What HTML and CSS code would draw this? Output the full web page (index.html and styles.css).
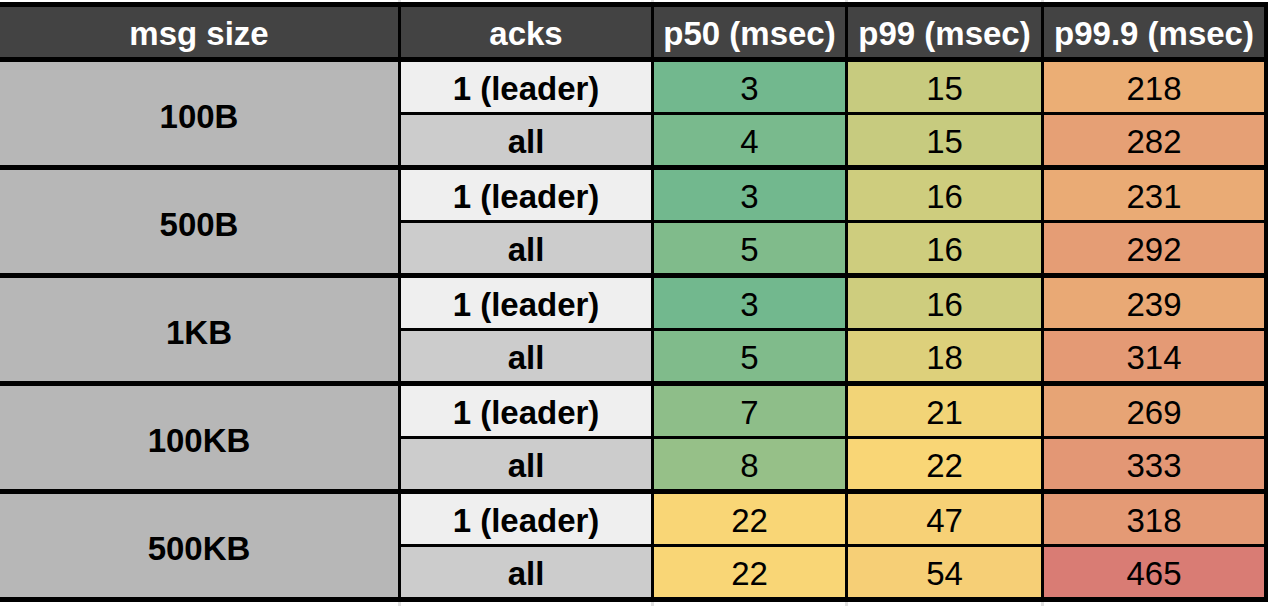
FILE: index.html
```html
<!DOCTYPE html>
<html lang="en">
<head>
<meta charset="utf-8">
<title>Kafka latency</title>
<link rel="stylesheet" href="styles.css">
</head>
<body>
<div class="page">
  <div class="sheet">
    <div class="cell head first">msg size</div>
    <div class="cell head">acks</div>
    <div class="cell head">p50 (msec)</div>
    <div class="cell head">p99 (msec)</div>
    <div class="cell head last">p99.9 (msec)</div>

    <div class="cell size">100B</div>
    <div class="cell ack leader">1 (leader)</div>
    <div class="cell num top" style="background:#72b88e">3</div>
    <div class="cell num top" style="background:#c7cb7f">15</div>
    <div class="cell num top last" style="background:#ebae75">218</div>
    <div class="cell ack all">all</div>
    <div class="cell num bot" style="background:#79ba8d">4</div>
    <div class="cell num bot" style="background:#c7cb7f">15</div>
    <div class="cell num bot last" style="background:#e6a075">282</div>

    <div class="cell size">500B</div>
    <div class="cell ack leader">1 (leader)</div>
    <div class="cell num top" style="background:#72b88e">3</div>
    <div class="cell num top" style="background:#cecd7e">16</div>
    <div class="cell num top last" style="background:#eaab75">231</div>
    <div class="cell ack all">all</div>
    <div class="cell num bot" style="background:#80bb8b">5</div>
    <div class="cell num bot" style="background:#cecd7e">16</div>
    <div class="cell num bot last" style="background:#e59d75">292</div>

    <div class="cell size">1KB</div>
    <div class="cell ack leader">1 (leader)</div>
    <div class="cell num top" style="background:#72b88e">3</div>
    <div class="cell num top" style="background:#cecd7e">16</div>
    <div class="cell num top last" style="background:#e9a975">239</div>
    <div class="cell ack all">all</div>
    <div class="cell num bot" style="background:#80bb8b">5</div>
    <div class="cell num bot" style="background:#ddd07b">18</div>
    <div class="cell num bot last" style="background:#e49a75">314</div>

    <div class="cell size">100KB</div>
    <div class="cell ack leader">1 (leader)</div>
    <div class="cell num top" style="background:#8ebe89">7</div>
    <div class="cell num top" style="background:#f2d477">21</div>
    <div class="cell num top last" style="background:#e7a475">269</div>
    <div class="cell ack all">all</div>
    <div class="cell num bot" style="background:#96c088">8</div>
    <div class="cell num bot" style="background:#f9d676">22</div>
    <div class="cell num bot last" style="background:#e39775">333</div>

    <div class="cell size">500KB</div>
    <div class="cell ack leader">1 (leader)</div>
    <div class="cell num top" style="background:#f9d676">22</div>
    <div class="cell num top" style="background:#f7d176">47</div>
    <div class="cell num top last" style="background:#e49a75">318</div>
    <div class="cell ack all">all</div>
    <div class="cell num bot" style="background:#f9d676">22</div>
    <div class="cell num bot" style="background:#f6cf76">54</div>
    <div class="cell num bot last" style="background:#d97c74">465</div>
  </div>
</div>
</body>
</html>
```
FILE: styles.css
```css
* {
  box-sizing: border-box;
}

html, body {
  margin: 0;
  padding: 0;
  background: #ffffff;
}

body {
  font-family: "Liberation Sans", Arial, sans-serif;
  color: #000000;
}

.page {
  width: 1268px;
  height: 606px;
  padding-top: 2px;
  background-color: #ffffff;
  background-image:
    linear-gradient(to right, transparent 398px, #e2e2e2 398px, #e2e2e2 401px, transparent 401px),
    linear-gradient(to right, transparent 651px, #e2e2e2 651px, #e2e2e2 654px, transparent 654px),
    linear-gradient(to right, transparent 845px, #e2e2e2 845px, #e2e2e2 848px, transparent 848px),
    linear-gradient(to right, transparent 1041px, #e2e2e2 1041px, #e2e2e2 1044px, transparent 1044px);
  overflow: hidden;
}

.sheet {
  display: grid;
  grid-template-columns: 398px 253px 194px 196px 227px;
  width: 1268px;
}

.cell {
  display: flex;
  align-items: center;
  justify-content: center;
  font-size: 33px;
  line-height: 1;
  white-space: nowrap;
  border-left: 3px solid #000;
  padding-top: 3px;
}

.cell.first,
.cell.size {
  border-left: 0;
}

.cell.last {
  border-right: 4px solid #000;
}

.head {
  height: 60px;
  background: #434343;
  color: #ffffff;
  font-weight: bold;
  border-top: 5px solid #000;
  border-bottom: 5px solid #000;
  padding-top: 2px;
}

.size {
  grid-row: span 2;
  background: #b7b7b7;
  font-weight: bold;
  border-bottom: 5px solid #000;
  padding-top: 6px;
}

.ack {
  font-weight: bold;
}

.leader {
  background: #efefef;
}

.all {
  background: #cccccc;
}

.leader,
.top {
  height: 53px;
  border-bottom: 3px solid #000;
}

.all,
.bot {
  height: 55px;
  border-bottom: 5px solid #000;
}
```
